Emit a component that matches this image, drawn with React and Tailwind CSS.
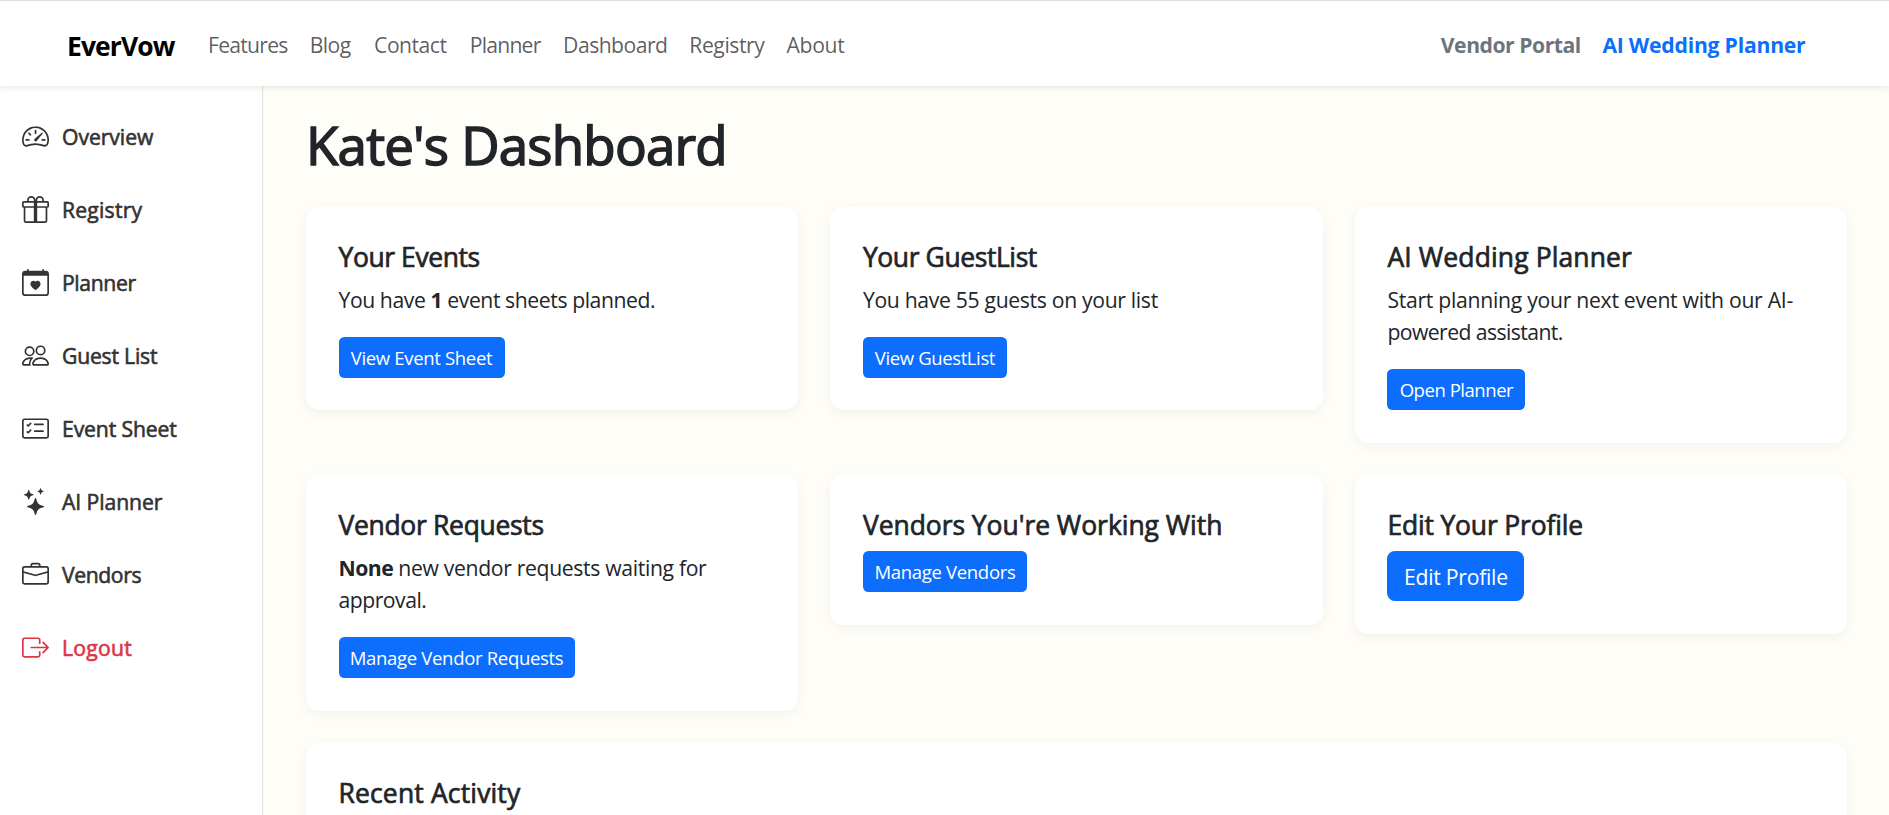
import {
  BsSpeedometer2,
  BsGift,
  BsCalendarHeart,
  BsPeople,
  BsCardChecklist,
  BsStars,
  BsBriefcase,
  BsBoxArrowRight,
} from "react-icons/bs";

const navLinks = [
  { label: "Features", cls: "tracking-[-0.0357em] w-[80px]" },
  { label: "Blog", cls: "tracking-[-0.028em] w-[42.5px]" },
  { label: "Contact", cls: "tracking-[-0.0249em] w-[73.8px]" },
  { label: "Planner", cls: "tracking-[-0.0366em] w-[71.6px]" },
  { label: "Dashboard", cls: "tracking-[-0.025em] w-[104.4px]" },
  { label: "Registry", cls: "tracking-[-0.0205em] w-[75.4px]" },
  { label: "About", cls: "tracking-[-0.014em] w-[60px]" },
];

const sideLinks = [
  { label: "Overview", Icon: BsSpeedometer2, cls: "tracking-[-0.0023em]" },
  { label: "Registry", Icon: BsGift, cls: "tracking-[0.0099em]" },
  { label: "Planner", Icon: BsCalendarHeart, cls: "tracking-[-0.0169em]" },
  { label: "Guest List", Icon: BsPeople, cls: "tracking-[-0.0102em]" },
  { label: "Event Sheet", Icon: BsCardChecklist, cls: "tracking-[-0.0059em]" },
  { label: "AI Planner", Icon: BsStars, cls: "tracking-[-0.0035em]" },
  { label: "Vendors", Icon: BsBriefcase, cls: "tracking-[-0.0189em]" },
  { label: "Logout", Icon: BsBoxArrowRight, cls: "tracking-[0.0117em]", danger: true },
];

function Header() {
  return (
    <header className="relative z-10 flex h-[86px] shrink-0 items-center border-t border-[#dedede] bg-white pl-[67px] pr-[83.5px] shadow-[0_2px_7px_rgba(0,0,0,0.09)]">
      <span className="w-[141px] pt-1 text-[26.46px] leading-[40px] font-bold tracking-[-0.0339em] text-black">
        EverVow
      </span>
      <nav className="flex gap-[21.8px] pt-1 text-black/65">
        {navLinks.map((l) => (
          <a key={l.label} href="#" className={`whitespace-nowrap ${l.cls}`}>
            {l.label}
          </a>
        ))}
      </nav>
      <div className="ml-auto flex gap-[21.6px] pt-1 font-bold whitespace-nowrap">
        <a href="#" className="tracking-[-0.0224em] text-[#6c757d]">Vendor Portal</a>
        <a href="#" className="tracking-[-0.0105em] text-[#0d6efd]">AI Wedding Planner</a>
      </div>
    </header>
  );
}

function Sidebar() {
  return (
    <aside className="w-[263px] shrink-0 border-r border-[#dedede] bg-white pt-[14px]">
      {sideLinks.map(({ label, Icon, cls, danger }) => (
        <a
          key={label}
          href="#"
          className={`flex h-[73px] items-center gap-[13px] pl-[22px] ${danger ? "text-[#dc3545]" : "text-[#333]"}`}
        >
          <Icon className="size-[27px]" />
          <span className={`pt-px [-webkit-text-stroke:0.6px_currentColor] ${cls}`}>{label}</span>
        </a>
      ))}
    </aside>
  );
}

function Card({ title, titleCls, className = "", children }) {
  return (
    <section
      className={`self-start rounded-[13.5px] bg-white px-[32.5px] pt-[34px] pb-[32.6px] shadow-[0_3px_13px_rgba(0,0,0,0.05)] ${className}`}
    >
      <h5 className={`mb-[9.6px] text-[26.46px] leading-[32.4px] whitespace-nowrap [-webkit-text-stroke:0.7px_currentColor] ${titleCls}`}>
        {title}
      </h5>
      {children}
    </section>
  );
}

function Button({ className = "", children }) {
  return (
    <button
      className={`flex h-[41px] items-center justify-center rounded-[5.4px] bg-[#0d6efd] pt-px text-[18.52px] leading-none whitespace-nowrap text-white ${className}`}
    >
      {children}
    </button>
  );
}

function Text({ children }) {
  return <p className="mb-[20.6px] pt-[0.8px] whitespace-nowrap">{children}</p>;
}

export default function App() {
  return (
    <div className="flex h-[815px] flex-col overflow-hidden bg-[#fffdf8] font-['Open_Sans','Noto_Sans',sans-serif] text-[21.17px] leading-[32.4px] text-[#212529]">
      <Header />
      <div className="flex min-h-0 flex-1">
        <Sidebar />
        <main className="flex-1 pt-[26px] pr-[42px] pl-[43px]">
          <h1 className="mb-[30px] text-[52.92px] leading-[65px] tracking-[-0.0155em] [-webkit-text-stroke:1.5px_currentColor]">
            Kate's Dashboard
          </h1>
          <div className="grid grid-cols-3 gap-[32.4px]">
            <Card title="Your Events" titleCls="tracking-[-0.0152em]">
              <Text>
                <span className="tracking-[-0.0195em]">
                  You have <b>1</b> event sheets planned.
                </span>
              </Text>
              <Button className="w-[166px] tracking-[-0.0183em]">View Event Sheet</Button>
            </Card>
            <Card title="Your GuestList" titleCls="tracking-[-0.015em]">
              <Text>
                <span className="tracking-[-0.0152em]">You have 55 guests on your list</span>
              </Text>
              <Button className="w-[144px] tracking-[-0.0211em]">View GuestList</Button>
            </Card>
            <Card title="AI Wedding Planner" titleCls="tracking-[0.005em]">
              <Text>
                <span className="tracking-[-0.0129em]">Start planning your next event with our AI-</span>
                <br />
                <span className="tracking-[-0.0269em]">powered assistant.</span>
              </Text>
              <Button className="w-[138px] tracking-[-0.025em]">Open Planner</Button>
            </Card>
            <Card title="Vendor Requests" titleCls="tracking-[-0.0112em]">
              <Text>
                <b className="tracking-[-0.0237em]">None</b>
                <span className="tracking-[-0.0157em]"> new vendor requests waiting for</span>
                <br />
                <span className="tracking-[-0.023em]">approval.</span>
              </Text>
              <Button className="w-[236px] tracking-[-0.0172em]">Manage Vendor Requests</Button>
            </Card>
            <Card title="Vendors You're Working With" titleCls="tracking-[-0.0015em]">
              <Button className="w-[164px] tracking-[-0.0173em]">Manage Vendors</Button>
            </Card>
            <Card title="Edit Your Profile" titleCls="tracking-[-0.0062em]">
              <button className="flex h-[50px] w-[137px] items-center justify-center rounded-[8px] bg-[#0d6efd] pt-[3px] tracking-[-0.0119em] whitespace-nowrap text-white">
                Edit Profile
              </button>
            </Card>
            <Card title="Recent Activity" titleCls="tracking-[0.0065em]" className="col-span-3 h-[160px] w-full" />
          </div>
        </main>
      </div>
    </div>
  );
}
